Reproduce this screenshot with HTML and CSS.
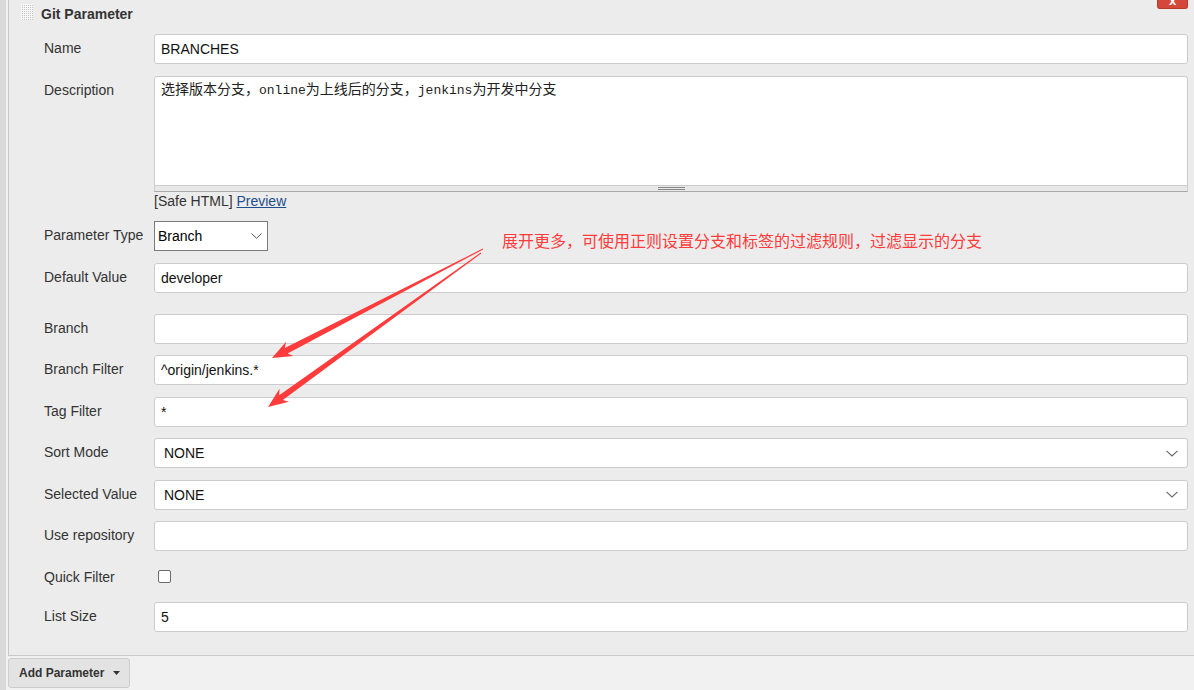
FILE: index.html
```html
<!DOCTYPE html>
<html lang="en">
<head>
<meta charset="utf-8">
<title>Git Parameter</title>
<link rel="stylesheet" href="styles.css">
</head>
<body>
<div class="page">
  <div class="strip"></div>
  <div class="main">
    <section class="panel">
      <header class="panel-head">
        <span class="grip"></span>
        <span class="title">Git Parameter</span>
        <span class="close"><span>x</span></span>
      </header>
      <div class="fields">
        <div class="row">
          <label class="lbl">Name</label>
          <div class="ctl"><input class="input" type="text" value="BRANCHES"></div>
        </div>
        <div class="row">
          <label class="lbl">Description</label>
          <div class="ctl">
            <div class="textarea">选择版本分支，<span class="mono">online</span>为上线后的分支，<span class="mono">jenkins</span>为开发中分支</div>
            <div class="resizer"></div>
            <div class="hint">[Safe HTML] <a href="#" class="link">Preview</a></div>
          </div>
        </div>
        <div class="row">
          <label class="lbl">Parameter Type</label>
          <div class="ctl">
            <div class="select native"><span>Branch</span>
              <svg width="11" height="6" viewBox="0 0 11 6"><polyline points="0.5,0.5 5.5,5.3 10.5,0.5" fill="none" stroke="#555" stroke-width="1"/></svg>
            </div>
          </div>
        </div>
        <div class="row">
          <label class="lbl">Default Value</label>
          <div class="ctl"><input class="input" type="text" value="developer"></div>
        </div>
        <div class="row advanced">
          <label class="lbl">Branch</label>
          <div class="ctl"><input class="input" type="text" value=""></div>
        </div>
        <div class="row">
          <label class="lbl">Branch Filter</label>
          <div class="ctl"><input class="input" type="text" value="^origin/jenkins.*"></div>
        </div>
        <div class="row">
          <label class="lbl">Tag Filter</label>
          <div class="ctl"><input class="input" type="text" value="*"></div>
        </div>
        <div class="row">
          <label class="lbl">Sort Mode</label>
          <div class="ctl">
            <div class="select"><span>NONE</span>
              <svg width="12" height="7" viewBox="0 0 12 7"><polyline points="0.5,0.8 6,6 11.5,0.8" fill="none" stroke="#666" stroke-width="1.1"/></svg>
            </div>
          </div>
        </div>
        <div class="row">
          <label class="lbl">Selected Value</label>
          <div class="ctl">
            <div class="select"><span>NONE</span>
              <svg width="12" height="7" viewBox="0 0 12 7"><polyline points="0.5,0.8 6,6 11.5,0.8" fill="none" stroke="#666" stroke-width="1.1"/></svg>
            </div>
          </div>
        </div>
        <div class="row">
          <label class="lbl">Use repository</label>
          <div class="ctl"><input class="input" type="text" value=""></div>
        </div>
        <div class="row quick">
          <label class="lbl">Quick Filter</label>
          <div class="ctl"><span class="checkbox"></span></div>
        </div>
        <div class="row">
          <label class="lbl">List Size</label>
          <div class="ctl"><input class="input" type="text" value="5"></div>
        </div>
      </div>
    </section>
    <div class="actions">
      <button class="add-btn" type="button">Add Parameter
        <svg class="caret" width="7" height="4" viewBox="0 0 7 4"><polygon points="0,0 7,0 3.5,4" fill="#333"/></svg>
      </button>
    </div>
  </div>
</div>

<div class="annot">展开更多，可使用正则设置分支和标签的过滤规则，过滤显示的分支</div>
<svg class="arrows" width="1194" height="690" viewBox="0 0 1194 690">
  <polygon fill="#ff3b3b" points="482.8,248.6 284.8,348.0 286.1,341.7 272,358 293.5,355.9 287.6,353.4 483.2,249.4"/>
  <polygon fill="#ff3b3b" points="480.7,252.6 279.2,395.2 279.5,388.8 268,407 288.9,401.8 282.8,400.0 481.3,253.4"/>
</svg>
</body>
</html>
```
FILE: styles.css
```css
html, body {
  margin: 0;
  padding: 0;
}
body {
  background: #f1f1f1;
  font-family: "Liberation Sans", Arial, sans-serif;
  font-size: 14px;
  color: #333;
  overflow: hidden;
}
.page {
  display: flex;
  min-height: 690px;
}
.strip {
  flex: none;
  width: 6px;
  margin-right: 2px;
  background: #d9d9d9;
}
.main {
  flex: 1;
  min-width: 0;
}
.panel {
  background: #ececec;
  border-left: 1px solid #c8c8c8;
  border-bottom: 1px solid #c8c8c8;
  padding-bottom: 23px;
}
.panel-head {
  display: flex;
  align-items: flex-start;
  height: 34px;
  padding-left: 12px;
}
.grip {
  flex: none;
  width: 12px;
  height: 16px;
  margin-top: 4px;
  background-color: #c4c4c4;
  background-image:
    linear-gradient(90deg, #f7f7f7 1px, transparent 1px),
    linear-gradient(#f7f7f7 1px, transparent 1px);
  background-size: 2px 2px;
}
.title {
  margin-left: 8px;
  font-weight: bold;
  line-height: 28px;
  color: #333;
}
.close {
  margin-left: auto;
  margin-right: 6px;
  width: 31px;
  height: 9px;
  box-sizing: border-box;
  background: #d4473a;
  border: 1px solid #b83a2e;
  border-top: none;
  border-radius: 0 0 3px 3px;
  overflow: hidden;
  display: flex;
  justify-content: center;
  align-items: flex-end;
}
.close span {
  color: #fff;
  font: bold 13px/13px "Liberation Sans", Arial, sans-serif;
  margin-bottom: 1px;
}
.fields {
  display: flex;
  flex-direction: column;
  gap: 11.5px;
  padding: 0 6px 0 35px;
}
.row {
  display: flex;
  align-items: flex-start;
}
.row.advanced {
  margin-top: 9.5px;
}
.lbl {
  flex: none;
  width: 110px;
  line-height: 28px;
  color: #333;
}
.ctl {
  flex: 1;
  min-width: 0;
}
.input {
  display: block;
  box-sizing: border-box;
  width: 100%;
  height: 30px;
  margin: 0;
  border: 1px solid #cccccc;
  border-radius: 3px;
  background: #fff;
  padding: 0 6px;
  font: 14px "Liberation Sans", Arial, sans-serif;
  color: #111;
  outline: none;
}
.textarea {
  box-sizing: border-box;
  width: 100%;
  height: 110px;
  border: 1px solid #cccccc;
  border-radius: 3px 3px 0 0;
  background: #fff;
  padding: 2px 6px;
  font: 14px/18px "Noto Sans CJK SC", sans-serif;
  color: #222;
}
.mono {
  font: 13px/18px "Liberation Mono", monospace;
}
.resizer {
  height: 5px;
  background: #e8e8e8;
  border: 1px solid #cccccc;
  border-top: none;
  border-bottom-color: #a9a9a9;
  display: flex;
  justify-content: center;
  align-items: center;
}
.resizer::before {
  content: "";
  width: 27px;
  height: 1px;
  border-top: 1px solid #888;
  border-bottom: 1px solid #888;
}
.hint {
  line-height: 18px;
  color: #333;
}
.link {
  color: #1f4e8c;
  text-decoration: underline;
}
.select {
  display: flex;
  align-items: center;
  justify-content: space-between;
  box-sizing: border-box;
  height: 30px;
  border: 1px solid #cccccc;
  border-radius: 3px;
  background: #fff;
  padding: 0 9px 0 9px;
  color: #111;
}
.select.native {
  width: 114px;
  border-color: #7a7a7a;
  border-radius: 0;
  padding: 0 5px 0 3px;
  color: #000;
}
.row.quick .lbl {
  line-height: 28px;
}
.checkbox {
  display: block;
  box-sizing: border-box;
  width: 13px;
  height: 13px;
  margin: 7.5px 0 0 4px;
  border: 1px solid #6b6b6b;
  border-radius: 2px;
  background: #fff;
}
.actions {
  padding-top: 2px;
}
.add-btn {
  display: flex;
  align-items: center;
  box-sizing: border-box;
  width: 122px;
  height: 30px;
  margin: 0;
  padding: 0 0 0 10px;
  background: #e3e3e3;
  border: 1px solid #cdcdcd;
  border-radius: 3px;
  font: bold 12px "Liberation Sans", Arial, sans-serif;
  color: #333;
}
.caret {
  margin-left: 9px;
}
.annot {
  position: absolute;
  left: 502px;
  top: 230px;
  font: 16px/20px "Noto Sans CJK SC", sans-serif;
  color: #ff3b3b;
  white-space: nowrap;
}
.arrows {
  position: absolute;
  left: 0;
  top: 0;
  pointer-events: none;
}
```
